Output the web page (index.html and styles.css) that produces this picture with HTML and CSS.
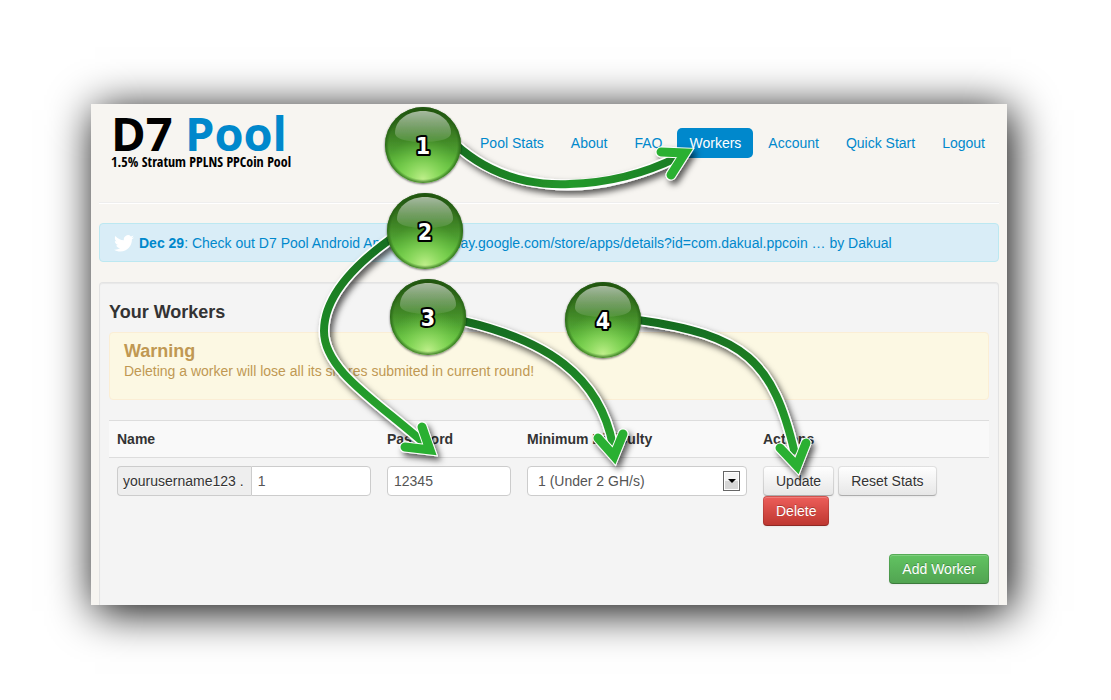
FILE: index.html
```html
<!DOCTYPE html>
<html lang="en">
<head>
<meta charset="utf-8">
<title>D7 Pool - Workers</title>
<link rel="stylesheet" href="styles.css">
</head>
<body>
<div class="page">
  <header class="header">
    <a class="logo" href="#">
      <span class="logo-name">D7 <span class="logo-accent">Pool</span></span>
      <span class="logo-tagline">1.5% Stratum PPLNS PPCoin Pool</span>
    </a>
    <nav class="nav">
      <a href="#">Pool Stats</a>
      <a href="#">About</a>
      <a href="#">FAQ</a>
      <a class="active" href="#">Workers</a>
      <a href="#">Account</a>
      <a href="#">Quick Start</a>
      <a href="#">Logout</a>
    </nav>
  </header>

  <a class="news" href="#">
    <svg class="bird" viewBox="0 0 24 20" aria-hidden="true"><path fill="#fff" d="M24 2.4c-.9.4-1.8.7-2.8.8 1-.6 1.800-1.600 2.200-2.700-1 .6-2 1-3.100 1.200A4.900 4.900 0 0 0 11.900 6.200C7.800 6 4.200 4 1.700 1 .4 3.200 1 6.100 3.200 7.600c-.8 0-1.600-.2-2.200-.6 0 2.300 1.600 4.400 3.900 4.900-.7.2-1.500.2-2.200.1.600 2 2.400 3.400 4.600 3.400C5.300 17 2.700 17.700 0 17.400c2.200 1.400 4.800 2.200 7.500 2.200 9.100 0 14.300-7.700 14-14.600 1-.7 1.800-1.600 2.500-2.600z"/></svg>
    <span><strong>Dec 29</strong>: Check out D7 Pool Android App at https://play.google.com/store/apps/details?id=com.dakual.ppcoin … by Dakual</span>
  </a>

  <main class="well">
    <h1 class="title">Your Workers</h1>
    <div class="warning">
      <h2 class="title">Warning</h2>
      <p>Deleting a worker will lose all its shares submited in current round!</p>
    </div>
    <table class="workers">
      <thead>
        <tr><th class="col-name">Name</th><th class="col-password">Password</th><th class="col-difficulty">Minimum Difficulty</th><th>Actions</th></tr>
      </thead>
      <tbody>
        <tr>
          <td>
            <div class="input-group">
              <label for="worker">yourusername123 .</label>
              <input class="field" id="worker" type="text" value="1">
            </div>
          </td>
          <td><input class="field" type="text" value="12345" aria-label="Password"></td>
          <td>
            <div class="select">
              <select class="field" aria-label="Minimum Difficulty"><option>1 (Under 2 GH/s)</option></select>
              <span class="select-arrow"></span>
            </div>
          </td>
          <td>
            <div class="actions">
              <button class="btn" type="button">Update</button>
              <button class="btn" type="button">Reset Stats</button>
              <button class="btn btn-danger" type="button">Delete</button>
            </div>
          </td>
        </tr>
      </tbody>
    </table>
    <div class="footer-actions">
      <button class="btn btn-success" type="button">Add Worker</button>
    </div>
  </main>

  <svg class="steps" viewBox="91 104 916 501" aria-hidden="true">
    <defs>
      <linearGradient id="arrow1" gradientUnits="userSpaceOnUse" x1="461" y1="140" x2="580" y2="185"><stop offset="0" stop-color="#187020"/><stop offset="1" stop-color="#239a2b"/></linearGradient>
      <linearGradient id="arrow1end" gradientUnits="userSpaceOnUse" x1="570" y1="0" x2="680" y2="0"><stop offset="0" stop-color="#239a2b"/><stop offset="1" stop-color="#1c7c24"/></linearGradient>
      <linearGradient id="arrow2" gradientUnits="userSpaceOnUse" x1="0" y1="238" x2="0" y2="440"><stop offset="0" stop-color="#187020"/><stop offset="1" stop-color="#28a82f"/></linearGradient>
      <linearGradient id="arrow34" gradientUnits="userSpaceOnUse" x1="0" y1="320" x2="0" y2="445"><stop offset="0" stop-color="#176b1f"/><stop offset="1" stop-color="#27a22e"/></linearGradient>
      <linearGradient id="ball" x1="0" y1="0" x2="0" y2="1"><stop offset="0" stop-color="#1d4c0c"/><stop offset=".45" stop-color="#428a28"/><stop offset=".75" stop-color="#5cb83a"/><stop offset="1" stop-color="#6ad242"/></linearGradient>
      <radialGradient id="glow" cx=".5" cy=".95" r=".55"><stop offset="0" stop-color="#caf394" stop-opacity=".9"/><stop offset=".5" stop-color="#98e266" stop-opacity=".5"/><stop offset="1" stop-color="#70cc46" stop-opacity="0"/></radialGradient>
      <radialGradient id="rim"><stop offset=".9" stop-color="#235f13" stop-opacity="0"/><stop offset="1" stop-color="#235f13" stop-opacity=".8"/></radialGradient>
      <linearGradient id="shine" x1="0" y1="0" x2="0" y2="1"><stop offset="0" stop-color="#fff" stop-opacity=".6"/><stop offset="1" stop-color="#fff" stop-opacity=".08"/></linearGradient>
      <filter id="shadow" x="-20%" y="-20%" width="150%" height="150%"><feDropShadow dx="3" dy="4" stdDeviation="3" flood-color="#000" flood-opacity=".65"/></filter>
      <filter id="ball-shadow" x="-20%" y="-20%" width="140%" height="140%"><feDropShadow dx="0" dy="1" stdDeviation="1" flood-color="#000" flood-opacity=".6"/></filter>
      <g id="badge">
        <circle r="38" fill="url(#ball)" filter="url(#ball-shadow)"/>
        <circle r="38" fill="url(#glow)"/>
        <circle r="38" fill="url(#rim)"/>
        <path fill="url(#shine)" d="M-28-12C-28-25-15-34 0-34S28-25 28-12C28-6 16-3 0-3S-28-6-28-12z"/>
      </g>
    </defs>

    <g class="arrow" filter="url(#shadow)">
      <path class="outline" d="M455 144C500 185 580 205 678 157"/>
      <path class="line" stroke="url(#arrow1)" d="M455 144C488 174 528 186 570 184"/>
      <path class="line" stroke="url(#arrow1end)" d="M569 184C606 183 642 175 678 157"/>
      <path class="head-outline" d="M661 152L685 153L671 175"/>
      <path class="head" d="M661 152L685 153L671 175"/>
    </g>
    <g class="arrow" filter="url(#shadow)">
      <path class="outline" d="M392 238C340 275 324 305 324 331C324 370 375 400 424 443"/>
      <path class="line" stroke="url(#arrow2)" d="M392 238C340 275 324 305 324 331C324 370 375 400 424 443"/>
      <path class="head-outline" d="M422 427L430 450L405 447"/>
      <path class="head" d="M422 427L430 450L405 447"/>
    </g>
    <g class="arrow" filter="url(#shadow)">
      <path class="outline" d="M463 321C545 340 600 375 613 446"/>
      <path class="line" stroke="url(#arrow34)" d="M463 321C545 340 600 375 613 446"/>
      <path class="head-outline" d="M598 438L614 456L623 434"/>
      <path class="head" d="M598 438L614 456L623 434"/>
    </g>
    <g class="arrow" filter="url(#shadow)">
      <path class="outline" d="M638 320C745 335 773 360 795 454"/>
      <path class="line" stroke="url(#arrow34)" d="M638 320C745 335 773 360 795 454"/>
      <path class="head-outline" d="M780 448L797 466L806 443"/>
      <path class="head" d="M780 448L797 466L806 443"/>
    </g>

    <g class="badges">
      <use href="#badge" x="423" y="145"/><text x="423" y="154">1</text>
      <use href="#badge" x="425" y="231"/><text x="425" y="240">2</text>
      <use href="#badge" x="428" y="317"/><text x="428" y="326">3</text>
      <use href="#badge" x="603" y="320"/><text x="603" y="329">4</text>
    </g>
  </svg>
</div>
</body>
</html>
```
FILE: styles.css
```css
* {
  box-sizing: border-box;
}

body {
  margin: 0;
  padding: 104px 104px 95px 91px;
  background: #fff;
  color: #333;
  font: 14px/20px "Liberation Sans", Arial, sans-serif;
}

a {
  color: #08c;
  text-decoration: none;
}

.page {
  position: relative;
  padding: 0 8px;
  background: #f7f5f1;
  box-shadow: 4px 6px 42px #000;
}

.header {
  display: flex;
  justify-content: space-between;
  align-items: flex-start;
  padding: 0 2px 0 12px;
  min-height: 99px;
  border-bottom: 1px solid #eee;
  box-shadow: 0 1px 0 #fff;
}

.logo {
  display: flex;
  flex-direction: column;
  padding-top: 5px;
  color: #000;
  white-space: nowrap;
}

.logo-name {
  font: bold 47px/48px "Open Sans", sans-serif;
}

.logo-accent {
  color: #08c;
}

.logo-tagline {
  font: bold 14px/10px "Liberation Sans Narrow", "Open Sans Condensed", "Liberation Sans", sans-serif;
}

.nav {
  display: flex;
  gap: 3px;
  padding-top: 24px;
}

.nav a {
  padding: 8px 12px;
  border-radius: 5px;
  line-height: 14px;
  white-space: nowrap;
}

.nav .active {
  background: #08c;
  color: #fff;
}

.news {
  display: flex;
  align-items: center;
  gap: 5px;
  margin: 20px 0;
  padding: 9px 14px 8px;
  border: 1px solid #bce8f1;
  border-radius: 4px;
  background: #d9edf7;
}

.bird {
  width: 20px;
  height: 17px;
}

.well {
  padding: 9px 9px 21px;
  border: 1px solid #e3e3e3;
  border-bottom: 0;
  border-radius: 4px 4px 0 0;
  background: #f4f4f4;
  box-shadow: inset 0 1px 1px rgba(0, 0, 0, 0.05);
}

.title {
  margin: 0;
  font-size: 18px;
  line-height: 20px;
}

.well > .title {
  margin: 10px 0;
}

.warning {
  margin-bottom: 20px;
  padding: 8px 14px 18px;
  border: 1px solid #fbeed5;
  border-radius: 4px;
  background: #fcf8e3;
  color: #c09853;
}

.warning p {
  margin: 0;
}

.workers {
  width: 100%;
  margin-bottom: 20px;
  border-collapse: separate;
  border-spacing: 0;
  table-layout: fixed;
}

.workers th,
.workers td {
  padding: 8px;
  border-top: 1px solid #ddd;
  text-align: left;
  vertical-align: top;
}

.workers th {
  background: #f9f9f9;
}

.col-name {
  width: 270px;
}

.col-password {
  width: 140px;
}

.col-difficulty {
  width: 236px;
}

.field {
  display: block;
  width: 100%;
  height: 30px;
  padding: 4px 6px;
  border: 1px solid #ccc;
  border-radius: 4px;
  background: #fff;
  color: #555;
  font: inherit;
}

.input-group {
  display: flex;
}

.input-group label {
  flex: none;
  padding: 4px 7px 4px 5px;
  border: 1px solid #ccc;
  border-right: 0;
  border-radius: 4px 0 0 4px;
  background: #eee;
  text-shadow: 0 1px 0 #fff;
}

.input-group .field {
  flex: 0 1 120px;
  min-width: 0;
  border-radius: 0 4px 4px 0;
}

.select {
  position: relative;
}

.select .field {
  padding-left: 10px;
  appearance: none;
}

.select-arrow {
  position: absolute;
  top: 5px;
  right: 7px;
  display: grid;
  place-items: center;
  width: 17px;
  height: 20px;
  border: 1px solid #666;
  background: linear-gradient(#f4f4f4 50%, #d6d6d6 50%);
  box-shadow: inset 0 0 0 1px #fff;
  pointer-events: none;
}

.select-arrow::before {
  content: "";
  border: 4px solid transparent;
  border-top-color: #000;
  border-bottom: 0;
}

.actions {
  display: flex;
  flex-wrap: wrap;
  gap: 0 4px;
}

.btn {
  height: 30px;
  padding: 4px 12px;
  border: 1px solid rgba(0, 0, 0, 0.12);
  border-bottom-color: rgba(0, 0, 0, 0.25);
  border-radius: 4px;
  background: linear-gradient(#fff, #e6e6e6) border-box;
  box-shadow: inset 0 1px 0 rgba(255, 255, 255, 0.2), 0 1px 2px rgba(0, 0, 0, 0.05);
  color: #333;
  font: inherit;
  text-shadow: 0 1px 1px rgba(255, 255, 255, 0.75);
  white-space: nowrap;
}

.btn-danger {
  background: linear-gradient(#ee5f5b, #bd362f) border-box;
  color: #fff;
  text-shadow: 0 -1px 0 rgba(0, 0, 0, 0.25);
}

.btn-success {
  background: linear-gradient(#62c462, #51a351) border-box;
  color: #fff;
  text-shadow: 0 -1px 0 rgba(0, 0, 0, 0.25);
}

.footer-actions {
  display: flex;
  justify-content: flex-end;
}

.steps {
  position: absolute;
  top: 0;
  left: 0;
  width: 100%;
  overflow: visible;
  pointer-events: none;
}

.arrow path {
  fill: none;
}

.outline {
  stroke: #fff;
  stroke-width: 11px;
}

.line {
  stroke-width: 8px;
}

.head-outline,
.head {
  stroke-linecap: round;
  stroke-linejoin: miter;
}

.head-outline {
  stroke: #fff;
  stroke-width: 11px;
}

.head {
  stroke: #2bb031;
  stroke-width: 9px;
}

.badges text {
  fill: #fff;
  stroke: #000;
  stroke-width: 4px;
  stroke-linejoin: round;
  paint-order: stroke;
  font: bold 23px "DejaVu Sans Condensed", "DejaVu Sans", sans-serif;
  text-anchor: middle;
}
```
